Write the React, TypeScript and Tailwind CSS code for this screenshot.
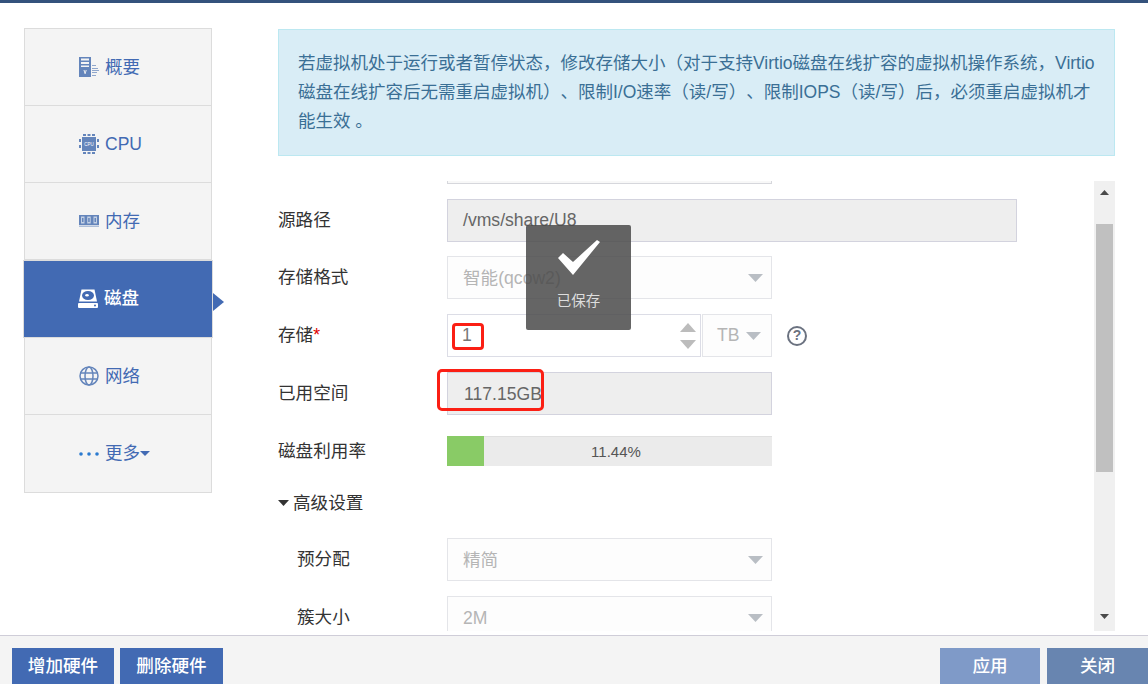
const font = { fontFamily: '"Liberation Sans", "Noto Sans CJK SC", sans-serif' };

const SummaryIcon = () => (
  <svg width="20" height="20" viewBox="0 0 20 20" fill="#6485bb">
    <path fillRule="evenodd" d="M0 0h12v20H0zM2 1.500v2h8v-2zM2 5v2h8V5zM2 8.500v1.500h8V8.500zM4.500 13l1.200 4h.8l1.200-4h-1l-.6 2.500-.6-2.500z" />
    <path d="M13 8h4v1h-4zM13 11h6v1h-6zM13 13h7v1h-7zM13 15h5v1h-5zM13 18h4v1h-4z" opacity=".7" />
  </svg>
);

const CpuIcon = () => (
  <svg width="20" height="20" viewBox="0 0 20 20" fill="#6485bb">
    <path d="M4 0h3v2H4zM8.500 0h3v2h-3zM13 0h3v2h-3zM4 18h3v2H4zM8.500 18h3v2h-3zM13 18h3v2h-3zM0 5h2v3H0zM0 11h2v3H0zM18 5h2v3h-2zM18 11h2v3h-2z" />
    <rect x="3" y="3" width="14" height="14" />
    <text x="10" y="11.800" textAnchor="middle" fontSize="4.500" fontFamily="Liberation Sans" fill="#fff">CPU</text>
  </svg>
);

const MemoryIcon = () => (
  <svg width="20" height="12" viewBox="0 0 20 12">
    <rect width="20" height="10" fill="#6485bb" />
    <path d="M2 1.500h3.500v7H2zM8.200 1.500h3.500v7H8.200zM14.500 1.500H18v7h-3.500z" fill="#c3d0e4" />
    <path d="M3 3h1.500v4H3zM9.200 3h1.500v4H9.200zM15.500 3H17v4h-1.500z" fill="#6485bb" />
    <path d="M0 10.500h20V12H0z" fill="#6485bb" opacity=".5" />
  </svg>
);

const DiskIcon = () => (
  <svg width="20" height="20" viewBox="0 0 20 20" fill="#fff">
    <path d="M3.500 0.500h13l2.500 12H1z" />
    <ellipse cx="10" cy="6.500" rx="6" ry="4.500" fill="#426ab3" />
    <ellipse cx="9" cy="6.300" rx="1.800" ry="1.200" />
    <path fillRule="evenodd" d="M1 14h18a1 1 0 0 1 1 1v3a1 1 0 0 1-1 1H1a1 1 0 0 1-1-1v-3a1 1 0 0 1 1-1zM17 15.500a1 1 0 1 0 0 2 1 1 0 0 0 0-2z" />
  </svg>
);

const GlobeIcon = () => (
  <svg width="20" height="20" viewBox="0 0 20 20" fill="none" stroke="#6485bb" strokeWidth="1.500">
    <circle cx="10" cy="10" r="9" />
    <ellipse cx="10" cy="10" rx="4" ry="9" />
    <path d="M1 7h18M1 13h18" />
  </svg>
);

const MoreIcon = () => (
  <svg width="20" height="6" viewBox="0 0 20 6" fill="#2b7bd0">
    <circle cx="2" cy="3" r="1.800" />
    <circle cx="10" cy="3" r="1.800" />
    <circle cx="18" cy="3" r="1.800" />
  </svg>
);

const Caret = () => (
  <svg width="15" height="8" viewBox="0 0 15 8" fill="#b9bec4">
    <path d="M0 0h15L7.500 8z" />
  </svg>
);

const navItems = [
  { label: "概要", icon: <SummaryIcon /> },
  { label: "CPU", icon: <CpuIcon /> },
  { label: "内存", icon: <MemoryIcon /> },
  { label: "磁盘", icon: <DiskIcon />, active: true },
  { label: "网络", icon: <GlobeIcon /> },
  { label: "更多", icon: <MoreIcon />, more: true },
];

const Sidebar = () => (
  <div className="w-[188px] h-[465px] mt-[25px] ml-6 shrink-0 border border-[#dcdcdc] bg-[#f4f4f4] flex flex-col">
    {navItems.map((item, i) =>
      item.active ? (
        <div key={i} className="relative h-[78px] -ml-[2px] w-[190px] shrink-0 flex items-center pl-[54px] pb-px gap-[6px] bg-[#426ab3] text-white text-[17.500px] border border-[#dcdcdc]">
          {item.icon}
          <span className="font-medium">{item.label}</span>
          <div className="absolute left-[189px] top-[32px] border-y-[9px] border-l-[11px] border-y-transparent border-l-[#426ab3]" />
        </div>
      ) : (
        <div key={i} className="h-[77px] shrink-0 flex items-center pl-[54px] gap-[6px] text-[#426ab3] text-[17.500px] border-b border-[#dcdcdc] last:border-b-0">
          {item.icon}
          <span>{item.label}</span>
          {item.more && (
            <svg className="-ml-[6px]" width="10" height="5" viewBox="0 0 10 5" fill="#426ab3">
              <path d="M0 0h10L5 5z" />
            </svg>
          )}
        </div>
      )
    )}
  </div>
);

const Label = ({ children, sub }: { children: React.ReactNode; sub?: boolean }) => (
  <div className={`text-[17.600px] text-[#333] w-[169px] shrink-0 ${sub ? "pl-[19px]" : ""}`}>{children}</div>
);

const Select = ({ value }: { value: string }) => (
  <div className="w-[325px] h-[43px] border border-[#e4e5e9] bg-[#fdfdfd] flex items-center pl-[15px] pr-[8px] justify-between text-[17.600px] text-[#b5b5b5]">
    <span className="pt-px">{value}</span>
    <Caret />
  </div>
);

const Form = () => (
  <div className="flex-1 h-[450px] overflow-hidden">
    <div className="w-[325px] h-[3px] ml-[169px] border-x border-b border-[#d6d7dc] bg-[#f8f8f8]" />
    <div className="flex items-center mt-[15px] h-[43px]">
      <Label>源路径</Label>
      <div className="w-[570px] h-[43px] border border-[#d3d3de] bg-[#eeeeee] flex items-center pl-[15px] text-[17.600px] text-[#666]">/vms/share/U8</div>
    </div>
    <div className="flex items-center mt-[14px] h-[43px]">
      <Label>存储格式</Label>
      <Select value="智能(qcow2)" />
    </div>
    <div className="flex items-center mt-[15px] h-[43px]">
      <Label>存储<span className="text-[#e00000]">*</span></Label>
      <div className="w-[254px] h-[43px] border border-[#dcdde6] flex items-center pl-[14px] pr-[4px] justify-between text-[17.600px] text-[#777]">
        <span>1</span>
        <div className="flex flex-col gap-[8px]">
          <svg width="16" height="9" viewBox="0 0 16 9" fill="#bcbcbc"><path d="M8 0l8 9H0z" /></svg>
          <svg width="16" height="9" viewBox="0 0 16 9" fill="#bcbcbc"><path d="M0 0h16L8 9z" /></svg>
        </div>
      </div>
      <div className="w-[70px] h-[43px] ml-px border border-[#e4e5e9] bg-[#fdfdfd] flex items-center pl-[14px] gap-[7px] text-[17.600px] text-[#b5b5b5]">
        <span>TB</span>
        <Caret />
      </div>
      <div className="w-[20px] h-[20px] ml-[15px] rounded-full border-2 border-[#6b7280] flex items-center justify-center text-[14px] font-bold text-[#6b7280]">?</div>
    </div>
    <div className="flex items-center mt-[15px] h-[43px]">
      <Label>已用空间</Label>
      <div className="w-[325px] h-[43px] border border-[#d3d3de] bg-[#eeeeee] flex items-center pl-[16px] pt-px text-[17.600px] text-[#666]">117.15GB</div>
    </div>
    <div className="flex items-center mt-[21px] h-[30px]">
      <Label>磁盘利用率</Label>
      <div className="relative w-[325px] h-[30px] bg-[#ebebeb] border-t border-[#e0e0e0]">
        <div className="absolute left-0 -top-px h-[30px] w-[37px] bg-[#89cb66]" />
        <div className="relative h-full flex items-center justify-center pl-[13px] pt-[2px] text-[15px] text-[#555]">11.44%</div>
      </div>
    </div>
    <div className="flex items-center mt-[25px] h-[24px] text-[17.600px] text-[#333] gap-[4px]">
      <svg width="11" height="6" viewBox="0 0 11 6" fill="#333"><path d="M0 0h11L5.500 6z" /></svg>
      <span>高级设置</span>
    </div>
    <div className="flex items-center mt-[23px] h-[43px]">
      <Label sub>预分配</Label>
      <Select value="精简" />
    </div>
    <div className="flex items-center mt-[15px] h-[43px]">
      <Label sub>簇大小</Label>
      <Select value="2M" />
    </div>
  </div>
);

const Scrollbar = () => (
  <div className="w-[21px] h-[450px] bg-[#f0f0f0] flex flex-col items-center shrink-0">
    <div className="h-[43px] w-full flex items-start justify-center pt-[9px]">
      <svg width="9" height="5" viewBox="0 0 9 5" fill="#4a4a4a"><path d="M4.500 0l4.500 5H0z" /></svg>
    </div>
    <div className="w-[17px] h-[248px] bg-[#c0c0c0]" />
    <div className="flex-1" />
    <div className="h-[20px] flex items-start justify-center pt-[3px]">
      <svg width="9" height="5" viewBox="0 0 9 5" fill="#4a4a4a"><path d="M0 0h9L4.500 5z" /></svg>
    </div>
  </div>
);

const Main = () => (
  <div className="w-[837px] ml-[66px] mt-[26px]">
    <div className="h-[127px] bg-[#d9edf6] border border-[#bce8f1] pl-[19px] pr-[17px] pt-[19px] text-[17.500px] leading-[29px] text-[#3a6f95] [text-spacing-trim:space-all]">
      若虚拟机处于运行或者暂停状态，修改存储大小（对于支持Virtio磁盘在线扩容的虚拟机操作系统，Virtio磁盘在线扩容后无需重启虚拟机）、限制I/O速率（读/写）、限制IOPS（读/写）后，必须重启虚拟机才能生效 。
    </div>
    <div className="flex mt-[25px]">
      <Form />
      <Scrollbar />
    </div>
  </div>
);

const FooterButton = ({ label, className }: { label: string; className: string }) => (
  <button className={`h-[36px] text-white text-[17.600px] font-medium ${className}`}>{label}</button>
);

export default function App() {
  return (
    <div className="relative w-[1148px] h-[684px] overflow-hidden bg-white flex flex-col" style={font}>
      <div className="h-[3px] bg-[#34527c] shrink-0" />
      <div className="flex flex-1 min-h-0">
        <Sidebar />
        <Main />
      </div>
      <div className="h-[49px] shrink-0 border-t border-[#cfcdd8] bg-[#f4f4f4] flex items-end pl-3">
        <FooterButton label="增加硬件" className="w-[102px] bg-[#426ab3]" />
        <FooterButton label="删除硬件" className="w-[103px] ml-[6px] bg-[#426ab3]" />
        <FooterButton label="应用" className="w-[100px] ml-auto bg-[#7f9ac8]" />
        <FooterButton label="关闭" className="w-[101px] ml-[7px] bg-[#6885b0]" />
      </div>

      {/* saved toast */}
      <div className="absolute left-[526px] top-[225px] w-[105px] h-[105px] rounded-[2px] bg-[#4a4a4a]/85 flex flex-col items-center pt-[13px]">
        <svg width="44" height="37" viewBox="0 0 44 37" fill="#fff">
          <path d="M1 20l5-5 10 9L40 2l3 2-27 33z" />
        </svg>
        <div className="mt-[16px] text-[14.500px] text-[#dddddd]">已保存</div>
      </div>

      {/* red annotation boxes */}
      <div className="absolute left-[452px] top-[323px] w-[32px] h-[27px] rounded-[4px] border-[3px] border-[#fb1f14]" />
      <div className="absolute left-[437px] top-[369px] w-[107px] h-[42px] rounded-[5px] border-[3px] border-[#fb1f14]" />
    </div>
  );
}
